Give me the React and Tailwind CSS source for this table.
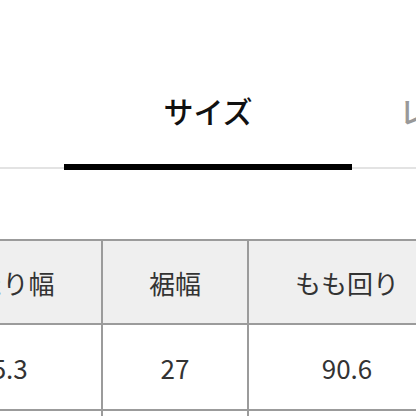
export default function App() {
  const font = { fontFamily: '"Noto Sans CJK JP", "Noto Sans", sans-serif' };
  return (
    <div className="w-[416px] h-[416px] overflow-hidden bg-white relative" style={font}>
      <div className="h-[80px]" />
      <div className="relative flex">
        <div className="absolute left-0 right-0 top-[87px] h-[2px] bg-[#e3e3e3]" />
        <div className="ml-[64px] w-[288px] shrink-0 relative flex flex-col items-center">
          <div className="text-[30px] leading-[60px] text-[#111] font-medium">サイズ</div>
          <div className="h-[24px]" />
          <div className="w-full h-[6px] bg-black relative z-10" />
        </div>
        <div className="w-[200px] shrink-0 pl-[47px] text-[30px] leading-[60px] text-[#999] font-medium">レビュー</div>
      </div>
      <div className="h-[69px]" />
      <div className="ml-[-96px] w-[700px] border-t-2 border-[#9b9b9b] text-[26px] text-[#333]">
        <div className="flex bg-[#efefef] border-b-2 border-[#9b9b9b] h-[84px]">
          <div className="w-[199px] shrink-0 border-r-2 border-[#9b9b9b] flex items-center justify-center">わたり幅</div>
          <div className="w-[146px] shrink-0 border-r-2 border-[#9b9b9b] flex items-center justify-center">裾幅</div>
          <div className="w-[198px] shrink-0 border-r-2 border-[#9b9b9b] flex items-center justify-center">もも回り</div>
          <div className="w-[146px] shrink-0 flex items-center justify-center">股下</div>
        </div>
        <div className="flex bg-white border-b-2 border-[#9b9b9b] h-[86px]">
          <div className="w-[199px] shrink-0 border-r-2 border-[#9b9b9b] flex items-center justify-center">35.3</div>
          <div className="w-[146px] shrink-0 border-r-2 border-[#9b9b9b] flex items-center justify-center">27</div>
          <div className="w-[198px] shrink-0 border-r-2 border-[#9b9b9b] flex items-center justify-center">90.6</div>
          <div className="w-[146px] shrink-0 flex items-center justify-center">70</div>
        </div>
        <div className="flex bg-white h-[86px]">
          <div className="w-[199px] shrink-0 border-r-2 border-[#9b9b9b] flex items-center justify-center">36.5</div>
          <div className="w-[146px] shrink-0 border-r-2 border-[#9b9b9b] flex items-center justify-center">28</div>
          <div className="w-[198px] shrink-0 border-r-2 border-[#9b9b9b] flex items-center justify-center">94.2</div>
          <div className="w-[146px] shrink-0 flex items-center justify-center">71</div>
        </div>
      </div>
    </div>
  );
}
